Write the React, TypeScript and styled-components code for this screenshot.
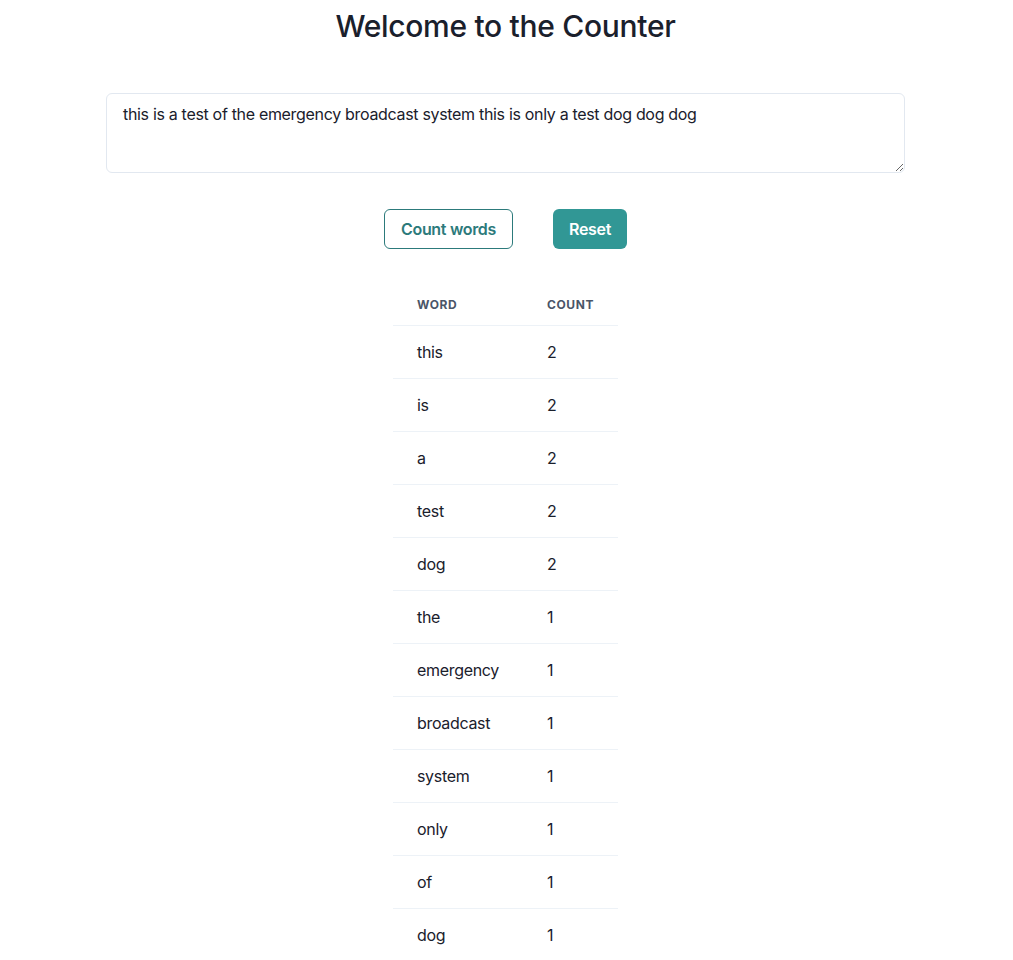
import styled, { createGlobalStyle } from "styled-components";

const counts: [string, number][] = [
  ["this", 2],
  ["is", 2],
  ["a", 2],
  ["test", 2],
  ["dog", 2],
  ["the", 1],
  ["emergency", 1],
  ["broadcast", 1],
  ["system", 1],
  ["only", 1],
  ["of", 1],
  ["dog", 1],
];

const text =
  "this is a test of the emergency broadcast system this is only a test dog dog dog";

function App() {
  return (
    <>
      <GlobalStyle />
      <Page>
        <Title>Welcome to the Counter</Title>
        <Input defaultValue={text} />
        <Buttons>
          <OutlineButton>Count words</OutlineButton>
          <SolidButton>Reset</SolidButton>
        </Buttons>
        <Table>
          <thead>
            <tr>
              <Th>Word</Th>
              <Th>Count</Th>
            </tr>
          </thead>
          <tbody>
            {counts.map(([word, n], i) => (
              <tr key={i}>
                <Td>{word}</Td>
                <Td>{n}</Td>
              </tr>
            ))}
          </tbody>
        </Table>
      </Page>
    </>
  );
}
export default App;

const GlobalStyle = createGlobalStyle`
  body {
    margin: 0;
    background: #fff;
    color: #1A202C;
    font-family: Inter, "Noto Sans", sans-serif;
    letter-spacing: -0.02em;
  }
`
const Page = styled.div`
  display: flex;
  flex-direction: column;
  align-items: center;
  padding: 8px 108px 0 106px;
`
const Title = styled.h1`
  margin: 0 0 49px 0;
  font-size: 30px;
  line-height: 36px;
  font-weight: 500;
  letter-spacing: -0.01em;
  color: #1A202C;
`
const Input = styled.textarea`
  box-sizing: border-box;
  width: 100%;
  min-height: 80px;
  height: 80px;
  padding: 8px 16px;
  border: 1px solid #E2E8F0;
  border-radius: 6px;
  font-family: inherit;
  font-size: 16px;
  line-height: 24px;
  letter-spacing: -0.02em;
  color: #1A202C;
  resize: vertical;
  outline: none;
`
const Buttons = styled.div`
  display: flex;
  gap: 40px;
  margin-top: 36px;
`
const BaseButton = styled.button`
  box-sizing: border-box;
  height: 40px;
  padding: 0 16px;
  border-radius: 6px;
  font-family: inherit;
  font-size: 16px;
  font-weight: 600;
  letter-spacing: -0.02em;
  cursor: pointer;
`
const OutlineButton = styled(BaseButton)`
  background: #fff;
  color: #2C7A7B;
  border: 1px solid #2C7A7B;
`
const SolidButton = styled(BaseButton)`
  background: #319795;
  color: #fff;
  border: none;
`
const Table = styled.table`
  margin-top: 36px;
  border-collapse: collapse;
`
const Th = styled.th`
  padding: 12px 24px;
  text-align: left;
  font-size: 12px;
  line-height: 16px;
  font-weight: 700;
  letter-spacing: 0.05em;
  text-transform: uppercase;
  color: #4A5568;
  border-bottom: 1px solid #EDF2F7;
`
const Td = styled.td`
  padding: 16px 24px;
  font-size: 16px;
  line-height: 20px;
  border-bottom: 1px solid #EDF2F7;
`
